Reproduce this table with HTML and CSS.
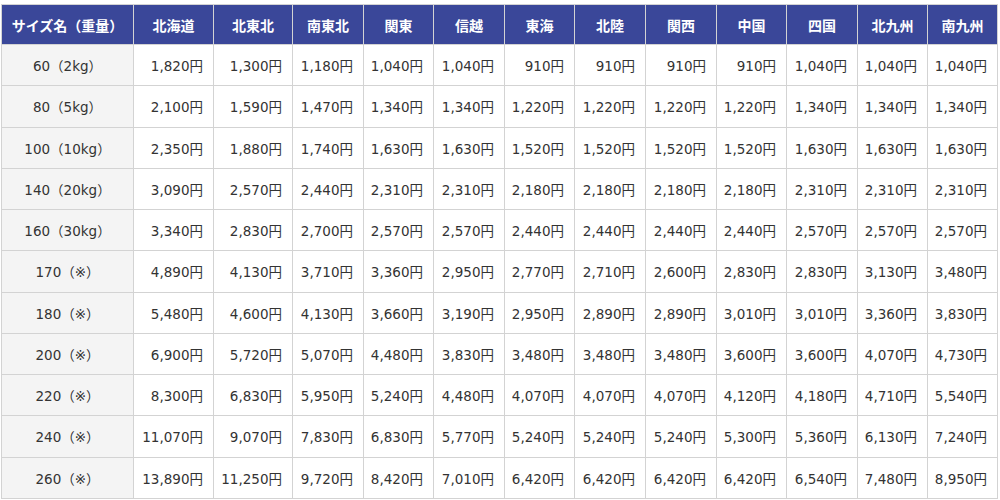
FILE: index.html
```html
<!DOCTYPE html>
<html lang="ja">
<head>
<meta charset="utf-8">
<title>料金表</title>
<link rel="stylesheet" href="styles.css">
</head>
<body>
<table class="price">
<colgroup>
<col class="c-size"><col class="c-w80"><col class="c-w79"><col class="c-w71"><col class="c-w70"><col class="c-w71"><col class="c-w70"><col class="c-w71"><col class="c-w71"><col class="c-w70"><col class="c-w71"><col class="c-w70"><col class="c-w70">
</colgroup>
<thead>
<tr><th>サイズ名（重量）</th><th>北海道</th><th>北東北</th><th>南東北</th><th>関東</th><th>信越</th><th>東海</th><th>北陸</th><th>関西</th><th>中国</th><th>四国</th><th>北九州</th><th>南九州</th></tr>
</thead>
<tbody>
<tr><td class="size">60（2kg）</td><td>1,820円</td><td>1,300円</td><td>1,180円</td><td>1,040円</td><td>1,040円</td><td>910円</td><td>910円</td><td>910円</td><td>910円</td><td>1,040円</td><td>1,040円</td><td>1,040円</td></tr>
<tr><td class="size">80（5kg）</td><td>2,100円</td><td>1,590円</td><td>1,470円</td><td>1,340円</td><td>1,340円</td><td>1,220円</td><td>1,220円</td><td>1,220円</td><td>1,220円</td><td>1,340円</td><td>1,340円</td><td>1,340円</td></tr>
<tr><td class="size">100（10kg）</td><td>2,350円</td><td>1,880円</td><td>1,740円</td><td>1,630円</td><td>1,630円</td><td>1,520円</td><td>1,520円</td><td>1,520円</td><td>1,520円</td><td>1,630円</td><td>1,630円</td><td>1,630円</td></tr>
<tr><td class="size">140（20kg）</td><td>3,090円</td><td>2,570円</td><td>2,440円</td><td>2,310円</td><td>2,310円</td><td>2,180円</td><td>2,180円</td><td>2,180円</td><td>2,180円</td><td>2,310円</td><td>2,310円</td><td>2,310円</td></tr>
<tr><td class="size">160（30kg）</td><td>3,340円</td><td>2,830円</td><td>2,700円</td><td>2,570円</td><td>2,570円</td><td>2,440円</td><td>2,440円</td><td>2,440円</td><td>2,440円</td><td>2,570円</td><td>2,570円</td><td>2,570円</td></tr>
<tr><td class="size">170（※）</td><td>4,890円</td><td>4,130円</td><td>3,710円</td><td>3,360円</td><td>2,950円</td><td>2,770円</td><td>2,710円</td><td>2,600円</td><td>2,830円</td><td>2,830円</td><td>3,130円</td><td>3,480円</td></tr>
<tr><td class="size">180（※）</td><td>5,480円</td><td>4,600円</td><td>4,130円</td><td>3,660円</td><td>3,190円</td><td>2,950円</td><td>2,890円</td><td>2,890円</td><td>3,010円</td><td>3,010円</td><td>3,360円</td><td>3,830円</td></tr>
<tr><td class="size">200（※）</td><td>6,900円</td><td>5,720円</td><td>5,070円</td><td>4,480円</td><td>3,830円</td><td>3,480円</td><td>3,480円</td><td>3,480円</td><td>3,600円</td><td>3,600円</td><td>4,070円</td><td>4,730円</td></tr>
<tr><td class="size">220（※）</td><td>8,300円</td><td>6,830円</td><td>5,950円</td><td>5,240円</td><td>4,480円</td><td>4,070円</td><td>4,070円</td><td>4,070円</td><td>4,120円</td><td>4,180円</td><td>4,710円</td><td>5,540円</td></tr>
<tr><td class="size">240（※）</td><td>11,070円</td><td>9,070円</td><td>7,830円</td><td>6,830円</td><td>5,770円</td><td>5,240円</td><td>5,240円</td><td>5,240円</td><td>5,300円</td><td>5,360円</td><td>6,130円</td><td>7,240円</td></tr>
<tr><td class="size">260（※）</td><td>13,890円</td><td>11,250円</td><td>9,720円</td><td>8,420円</td><td>7,010円</td><td>6,420円</td><td>6,420円</td><td>6,420円</td><td>6,420円</td><td>6,540円</td><td>7,480円</td><td>8,950円</td></tr>
</tbody>
</table>
</body>
</html>
```
FILE: styles.css
```css
html, body {
  margin: 0;
  padding: 0;
  background: #ffffff;
}
body {
  padding: 4px 0 0 1px;
  font-family: "DejaVu Sans", "Noto Sans CJK JP", sans-serif;
  color: #333333;
}
.price {
  border-collapse: collapse;
  table-layout: fixed;
  width: 996px;
}
.c-size { width: 132px; }
.c-w80 { width: 80px; }
.c-w79 { width: 79px; }
.c-w71 { width: 71px; }
.c-w70 { width: 70px; }
.price th,
.price td {
  border: 1px solid #d3d3d3;
  padding: 0 10px 0 3px;
  white-space: nowrap;
}
.price th {
  height: 39px;
  background: #3a4799;
  color: #ffffff;
  font-family: "Noto Sans CJK JP", sans-serif;
  font-size: 14px;
  font-weight: 700;
  text-align: center;
  padding: 0 2px;
}
.price td {
  height: 40.25px;
  font-size: 13.5px;
  text-align: right;
}
.price td.size {
  background: #f4f4f4;
  text-align: center;
  padding: 0 4px;
}
```
